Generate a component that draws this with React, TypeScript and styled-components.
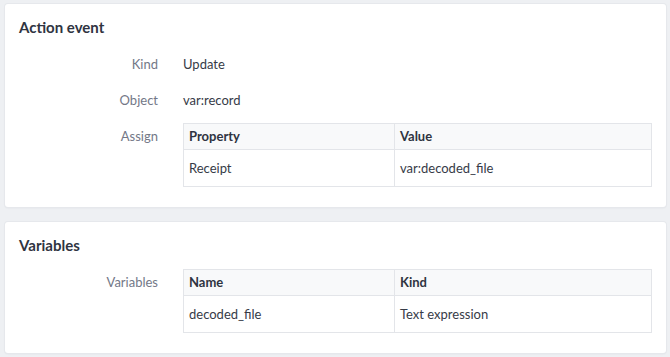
import styled, { createGlobalStyle } from 'styled-components';

const GlobalStyle = createGlobalStyle`
    html, body {
        margin: 0;
        padding: 0;
        background-color: #eef0f3;
    }
    body {
        font-family: Lato, "Noto Sans", sans-serif;
        color: #363b47;
    }
`;

const Page = styled.div`
    display: flex;
    flex-direction: column;
    gap: 15px;
    padding: 4px 4px 4px 5px;
`;

const Card = styled.section`
    background-color: #ffffff;
    border-radius: 3px;
    box-shadow: 0 0 0 1px #e6e8ec, 0 1px 2px rgba(30, 40, 60, 0.08);
    padding: 13px 14px 12px;
`;

const CardTitle = styled.h2`
    margin: 0 0 9px;
    font-size: 15px;
    line-height: 20px;
    font-weight: 700;
    color: #2f3441;
`;

const FieldRow = styled.div`
    display: grid;
    grid-template-columns: 139px 1fr;
    column-gap: 25px;
    padding: 8px 0;
    font-size: 13px;
    line-height: 20px;
`;

const FieldLabel = styled.div`
    text-align: right;
    color: #737887;
`;

const FieldValue = styled.div<{ $table?: boolean }>`
    color: #363b47;
    margin-top: ${props => (props.$table ? '-3px' : '0')};
`;

const Table = styled.table`
    width: 469px;
    border-collapse: collapse;
    table-layout: fixed;
    font-size: 13px;
    line-height: 20px;
`;

const HeadCell = styled.th<{ $width?: string }>`
    width: ${props => props.$width ?? 'auto'};
    text-align: left;
    font-weight: 700;
    color: #2f3441;
    background-color: #f8f9fa;
    border: 1px solid #e3e5e9;
    padding: 2px 5px 3px;
`;

const BodyCell = styled.td`
    color: #363b47;
    border: 1px solid #e3e5e9;
    padding: 8px 5px;
`;

type Column = { title: string; width: string };

function DataTable({ columns, rows }: Readonly<{ columns: Column[]; rows: string[][] }>) {
    return (
        <Table>
            <thead>
                <tr>
                    {columns.map(c => (
                        <HeadCell key={c.title} $width={c.width}>{c.title}</HeadCell>
                    ))}
                </tr>
            </thead>
            <tbody>
                {rows.map((r, i) => (
                    <tr key={i}>
                        {r.map((cell, j) => <BodyCell key={j}>{cell}</BodyCell>)}
                    </tr>
                ))}
            </tbody>
        </Table>
    );
}

export default function App() {
    return (
        <>
            <GlobalStyle />
            <Page>
                <Card>
                    <CardTitle>Action event</CardTitle>
                    <FieldRow>
                        <FieldLabel>Kind</FieldLabel>
                        <FieldValue>Update</FieldValue>
                    </FieldRow>
                    <FieldRow>
                        <FieldLabel>Object</FieldLabel>
                        <FieldValue>var:record</FieldValue>
                    </FieldRow>
                    <FieldRow>
                        <FieldLabel>Assign</FieldLabel>
                        <FieldValue $table>
                            <DataTable
                                columns={[{ title: 'Property', width: '200px' }, { title: 'Value', width: 'auto' }]}
                                rows={[['Receipt', 'var:decoded_file']]}
                            />
                        </FieldValue>
                    </FieldRow>
                </Card>
                <Card>
                    <CardTitle>Variables</CardTitle>
                    <FieldRow>
                        <FieldLabel>Variables</FieldLabel>
                        <FieldValue $table>
                            <DataTable
                                columns={[{ title: 'Name', width: '200px' }, { title: 'Kind', width: 'auto' }]}
                                rows={[['decoded_file', 'Text expression']]}
                            />
                        </FieldValue>
                    </FieldRow>
                </Card>
            </Page>
        </>
    );
}
